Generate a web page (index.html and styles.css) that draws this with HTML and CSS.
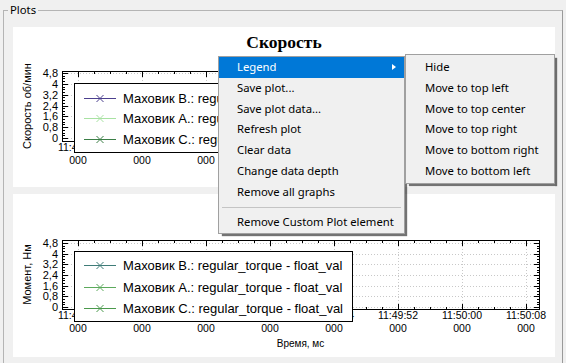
FILE: index.html
```html
<!DOCTYPE html>
<html lang="ru">
<head>
    <meta charset="UTF-8">
    <title>Plots</title>
    <link rel="stylesheet" href="styles.css">
</head>
<body>
    <fieldset class="plots">
        <legend>Plots</legend>
        <div class="plot-list">
            <div class="plot plot-speed"><svg id="plot-speed" width="542" height="160"></svg></div>
            <div class="plot plot-torque"><svg id="plot-torque" width="542" height="163"></svg></div>
        </div>
    </fieldset>

    <div class="menu menu-main">
        <div class="menu-item active has-sub">Legend</div>
        <div class="menu-item">Save plot...</div>
        <div class="menu-item">Save plot data...</div>
        <div class="menu-item">Refresh plot</div>
        <div class="menu-item">Clear data</div>
        <div class="menu-item">Change data depth</div>
        <div class="menu-item">Remove all graphs</div>
        <div class="menu-sep"></div>
        <div class="menu-item">Remove Custom Plot element</div>
    </div>

    <div class="menu menu-sub">
        <div class="menu-item">Hide</div>
        <div class="menu-item">Move to top left</div>
        <div class="menu-item">Move to top center</div>
        <div class="menu-item">Move to top right</div>
        <div class="menu-item">Move to bottom right</div>
        <div class="menu-item">Move to bottom left</div>
    </div>

    <script src="plot.js"></script>
</body>
</html>
```

FILE: styles.css
```css
body {
    margin: 0;
    background-color: #f0f0f0;
    font-family: "Noto Sans", sans-serif;
    font-size: 11.3px;
    color: #000;
}

.plots {
    margin: 2px 3px 0 3px;
    padding: 9px 7px 8px 9px;
    border: 1px solid #b4b4b4;
    border-right-color: #9a9a9a;
    min-width: 0;
}

.plots legend {
    margin-left: -5px;
    padding: 0 2px;
    line-height: 16px;
}

.plot-list {
    display: flex;
    flex-direction: column;
    gap: 7px;
}

.plot {
    background-color: #fff;
}

.plot svg {
    display: block;
}

/* plot texts */
.p-title {
    font-family: "Liberation Serif", serif;
    font-weight: bold;
    font-size: 17.5px;
}

.p-tick {
    font-family: "Liberation Sans", sans-serif;
    font-size: 11px;
}

.p-time {
    font-family: "Liberation Sans", sans-serif;
    font-size: 10.5px;
}

.p-axis {
    font-family: "Liberation Sans", sans-serif;
    font-size: 11px;
}

.p-xaxis {
    font-family: "Liberation Sans", sans-serif;
    font-size: 10px;
}

.p-legend {
    font-family: "Liberation Sans", sans-serif;
    font-size: 13px;
}

.p-line {
    stroke: #000;
    stroke-width: 1;
    shape-rendering: crispEdges;
}

.p-grid {
    stroke: #c8c8c8;
    stroke-width: 1;
    stroke-dasharray: 1 2;
    shape-rendering: crispEdges;
}

/* context menu */
.menu {
    position: absolute;
    background-color: #f0f0f0;
    border: 1px solid #a0a0a0;
    box-shadow: 3px 3px 1px -1px rgba(0, 0, 0, 0.55);
    box-sizing: border-box;
}

.menu-main {
    left: 218px;
    top: 56px;
    width: 187px;
    padding-bottom: 1px;
}

.menu-sub {
    left: 405px;
    top: 54px;
    width: 150px;
    padding: 2px 0 1px 0;
}

.menu-item {
    height: 20.8px;
    line-height: 20.8px;
    padding-left: 18px;
    white-space: nowrap;
    position: relative;
}

.menu-sub .menu-item {
    padding-left: 19px;
}

.menu-item.active {
    background-color: #0078d7;
    color: #fff;
}

.has-sub::after {
    content: "";
    position: absolute;
    right: 8px;
    top: 7px;
    border-left: 4px solid #fff;
    border-top: 3.5px solid transparent;
    border-bottom: 3.5px solid transparent;
}

.menu-sep {
    height: 1px;
    margin: 4px 3px;
    background-color: #c4c4c4;
}
```

FILE: plot.js
```js
const NS = 'http://www.w3.org/2000/svg';

const times = ['11:49:12', '11:49:20', '11:49:28', '11:49:36', '11:49:44', '11:49:52', '11:50:00', '11:50:08'];
const values = ['0', '0,8', '1,6', '2,4', '3,2', '4', '4,8'];
const names = ['Маховик В.', 'Маховик А.', 'Маховик С.'];

// labels: how many time labels are left uncovered by the open context menu
const plots = [
    {
        id: 'plot-speed',
        title: 'Скорость',
        yLabel: 'Скорость об/мин',
        rect: { left: 49, top: 44, right: 526, bottom: 114 },
        zero: 111, step: 10.83,
        labels: 3,
        legend: { top: 56, height: 69, rows: [71, 91, 112] },
        colors: ['#4b3f8e', '#a8e2a2', '#3b7e46']
    },
    {
        id: 'plot-torque',
        title: '',
        yLabel: 'Момент, Нм',
        rect: { left: 49, top: 46, right: 526, bottom: 115 },
        zero: 113, step: 10.67,
        labels: 8,
        legend: { top: 57, height: 70, rows: [71, 93, 114] },
        colors: ['#3f7c78', '#5caa5c', '#4a994c']
    }
];

function add(parent, tag, attrs, text) {
    const node = document.createElementNS(NS, tag);
    for (const key in attrs) node.setAttribute(key, attrs[key]);
    if (text !== undefined) node.textContent = text;
    parent.appendChild(node);
    return node;
}

function drawPlot(cfg) {
    const svg = document.getElementById(cfg.id);
    const { left, top, right, bottom } = cfg.rect;
    const line = (x1, y1, x2, y2, cls) => add(svg, 'line', { x1, y1, x2, y2, class: cls || 'p-line' });

    if (cfg.title) {
        add(svg, 'text', { x: 271, y: 21, 'text-anchor': 'middle', class: 'p-title' }, cfg.title);
    }

    // grid
    const xs = times.map((t, k) => 65 + 64 * k);
    const ys = values.map((v, i) => Math.round(cfg.zero - i * cfg.step));
    xs.forEach(x => line(x + 0.5, top, x + 0.5, bottom, 'p-grid'));
    ys.forEach(y => line(left, y + 0.5, right, y + 0.5, 'p-grid'));

    // axis rect
    add(svg, 'rect', {
        x: left + 0.5, y: top + 0.5, width: right - left, height: bottom - top,
        fill: 'none', class: 'p-line'
    });

    // x ticks, top and bottom
    for (let j = -1; j < 31; j++) {
        const x = 65 + 16 * j;
        if (x <= left || x >= right) continue;
        const len = j % 4 === 0 ? 5 : 2;
        line(x + 0.5, bottom, x + 0.5, bottom - len);
        line(x + 0.5, top + 1, x + 0.5, top + 1 + len);
    }

    // y ticks, left and right
    for (let j = 0; j < 28; j++) {
        const y = Math.round(cfg.zero - j * cfg.step / 4);
        if (y <= top || y >= bottom) continue;
        const len = j % 4 === 0 ? 5 : 2;
        line(left + 1, y + 0.5, left + 1 + len, y + 0.5);
        line(right, y + 0.5, right - len, y + 0.5);
    }

    ys.forEach((y, i) => {
        add(svg, 'text', { x: 45, y: y + 4, 'text-anchor': 'end', class: 'p-tick' }, values[i]);
    });

    xs.slice(0, cfg.labels).forEach((x, k) => {
        add(svg, 'text', { x, y: bottom + 10, 'text-anchor': 'middle', class: 'p-time' }, times[k]);
        add(svg, 'text', { x, y: bottom + 23, 'text-anchor': 'middle', class: 'p-time' }, '000');
    });

    if (cfg.labels === times.length) {
        add(svg, 'text', { x: (left + right) / 2, y: bottom + 38, 'text-anchor': 'middle', class: 'p-xaxis' }, 'Время, мс');
    }

    const cy = (top + bottom) / 2;
    add(svg, 'text', {
        x: 18, y: cy, 'text-anchor': 'middle', class: 'p-axis',
        transform: `rotate(-90 18 ${cy})`
    }, cfg.yLabel);

    // legend
    const lg = cfg.legend;
    add(svg, 'rect', {
        x: 61.5, y: lg.top + 0.5, width: 278, height: lg.height,
        fill: '#fff', class: 'p-line'
    });
    lg.rows.forEach((y, i) => {
        const c = cfg.colors[i];
        const yy = y + 0.5;
        add(svg, 'line', { x1: 71, y1: yy, x2: 103, y2: yy, stroke: c });
        add(svg, 'line', { x1: 83.5, y1: yy - 3.5, x2: 90.5, y2: yy + 3.5, stroke: c });
        add(svg, 'line', { x1: 83.5, y1: yy + 3.5, x2: 90.5, y2: yy - 3.5, stroke: c });
        add(svg, 'text', { x: 110, y: y + 4.5, class: 'p-legend' },
            names[i] + ': regular_torque - float_val');
    });
}

plots.forEach(drawPlot);
```
